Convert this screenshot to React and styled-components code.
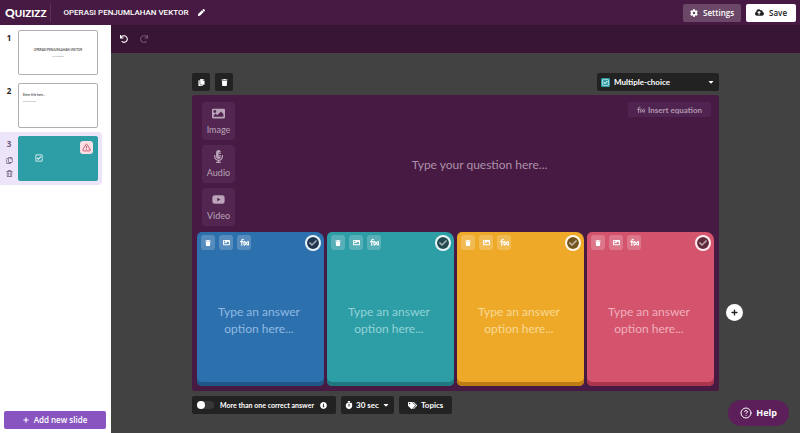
import React from "react";
import styled, { createGlobalStyle, css } from "styled-components";
import {
  FaPen, FaCog, FaCloudUploadAlt, FaUndo, FaRedo, FaCopy, FaTrash, FaImage,
  FaMicrophoneAlt, FaYoutube, FaCaretDown, FaCheck, FaPlus, FaStopwatch,
  FaTags, FaInfoCircle, FaRegCopy, FaRegTrashAlt, FaRegCheckSquare,
} from "react-icons/fa";
import { TriangleAlert, CircleHelp } from "lucide-react";

const ui = '"Open Sans", "Noto Sans", sans-serif';
const round = 'Lato, "Open Sans", sans-serif';

const GlobalStyle = createGlobalStyle`
  *, *::before, *::after { box-sizing: border-box; }
  body { margin: 0; font-family: ${round}; background: #424242; }
  button, select, textarea, input { font: inherit; color: inherit; margin: 0; }
  button, select { cursor: pointer; }
  svg { display: block; flex: none; }
  h1, p { margin: 0; }
`;

const Page = styled.div`
  min-height: 100vh;
  display: flex;
  flex-direction: column;
`;

const Header = styled.header`
  display: flex;
  align-items: center;
  height: 25px;
  padding: 0 4px 0 5px;
  gap: 4px;
  background: #461a42;
  color: #fff;
  font-family: ${ui};
  font-weight: 600;
`;

const Logo = styled.a`
  display: flex;
  align-items: center;
  color: #fff;
  text-decoration: none;
  font: 900 10px/14px ${round};
`;

const LogoInitial = styled.span`
  font-size: 12px;
`;

const Divider = styled.span`
  width: 1px;
  height: 19px;
  background: #5a3156;
`;

const Title = styled.h1`
  margin: 0 5px 0 8px;
  font-family: Roboto, ${ui};
  font-size: 8px;
  line-height: 12px;
  font-weight: 500;
  white-space: nowrap;
`;

const IconButton = styled.button`
  display: flex;
  align-items: center;
  justify-content: center;
  padding: 0;
  border: 0;
  background: none;
  color: ${(p) => p.$color || "#fff"};
`;

const HeaderActions = styled.div`
  display: flex;
  gap: 5px;
  margin-left: auto;
`;

const HeaderButton = styled.button`
  display: flex;
  align-items: center;
  justify-content: center;
  gap: 5px;
  height: 18px;
  padding: 0 ${(p) => (p.$primary ? "9px" : "7px")};
  border: 0;
  border-radius: 2px;
  font-size: 8px;
  background: ${(p) => (p.$primary ? "#fff" : "#6b4768")};
  color: ${(p) => (p.$primary ? "#222" : "#fff")};
`;

const Body = styled.div`
  flex: 1;
  display: grid;
  grid-template-columns: 111px minmax(0, 1fr);
`;

const Sidebar = styled.aside`
  display: flex;
  flex-direction: column;
  background: #fff;
  padding-top: 1px;
`;

const SlideList = styled.ol`
  list-style: none;
  margin: 0;
  padding: 0 9px 0 0;
  flex: 1;
`;

const SlideItem = styled.li`
  display: grid;
  grid-template-columns: 18px 1fr;
  padding: 4px 4px 4px 0;
  border-radius: 0 4px 4px 0;
  background: ${(p) => (p.$active ? "#ece4f9" : "transparent")};
`;

const SlideRail = styled.div`
  display: flex;
  flex-direction: column;
  align-items: center;
  gap: 6px;
  color: ${(p) => (p.$active ? "#6d5a7c" : "#222")};
  font: 700 8px/15px ${ui};
`;

const Thumb = styled.button`
  display: block;
  width: 100%;
  height: 45px;
  padding: ${(p) => (p.$centered ? "16px 0 0" : "5px 4px")};
  border: 1px solid #b5adb5;
  border-radius: 2px;
  background: #fff;
  text-align: ${(p) => (p.$centered ? "center" : "left")};
  color: #555;
  ${(p) => p.$question && css`
    display: flex;
    align-items: flex-start;
    justify-content: space-between;
    padding: 4px 4px 0 16px;
    border-color: #2d9da6;
    background: #2d9da6;
    color: #fff;
  `}
`;

const ThumbTitle = styled.span`
  display: block;
  font-size: 3px;
  line-height: 6px;
  font-weight: 700;
`;

const ThumbText = styled.span`
  display: block;
  font-size: 2px;
  line-height: 6px;
  color: #888;
`;

const ThumbBody = styled.span`
  display: block;
  height: 28px;
`;

const ThumbMark = styled.span`
  align-self: center;
  margin-bottom: 6px;
`;

const Warning = styled.span`
  display: flex;
  align-items: center;
  justify-content: center;
  width: 13px;
  height: 13px;
  border-radius: 3px;
  background: #fbdfe5;
  color: #c0354f;
`;

const AddSlide = styled.button`
  display: flex;
  align-items: center;
  justify-content: center;
  gap: 5px;
  height: 18px;
  margin: 0 5px 4px 4px;
  border: 0;
  border-radius: 2px;
  background: #8854c0;
  color: #fff;
  font: 600 8px/12px ${ui};
`;

const Main = styled.main`
  display: flex;
  flex-direction: column;
  background: #424242;
`;

const History = styled.div`
  display: flex;
  align-items: center;
  gap: 12px;
  height: 28px;
  padding: 0 9px;
  background: #381435;
`;

const Workspace = styled.div`
  flex: 1;
  display: grid;
  grid-template-columns: 81px minmax(0, 1fr) 81px;
  padding: 20px 0 19px;
`;

const Editor = styled.section`
  grid-column: 2;
  display: flex;
  flex-direction: column;
`;

const Bar = styled.div`
  display: flex;
  gap: 5px;
  ${(p) => (p.$bottom ? "margin-top: 5px;" : "margin-bottom: 4px;")}
`;

const dark = css`
  display: flex;
  align-items: center;
  justify-content: center;
  height: 18px;
  border: 0;
  border-radius: 2px;
  background: #222;
  color: #fff;
  font-weight: 700;
  font-size: 8px;
  line-height: 12px;
`;

const DarkButton = styled.button`
  ${dark}
  gap: 4px;
  padding: 0 ${(p) => (p.$square ? "0" : "9px")};
  min-width: 18px;
`;

const Picker = styled.label`
  ${dark}
  gap: ${(p) => (p.$end ? "4px" : "3px")};
  padding: 0 4px;
  ${(p) => p.$end && css`
    width: 122px;
    margin-left: auto;
  `}
`;

const Select = styled.select`
  appearance: none;
  flex: 1 0 auto;
  padding: 0;
  border: 0;
  background: transparent;
  option { color: #222; }
`;

const TypeMark = styled.span`
  padding: 1px;
  border-radius: 1px;
  background: #2d9da6;
`;

const SwitchLabel = styled.label`
  ${dark}
  gap: 6px;
  padding: 0 9px 0 5px;
  font-size: 7px;
`;

const Switch = styled.input`
  appearance: none;
  width: 17px;
  height: 8px;
  border-radius: 4px;
  background: #383838;
  &::before {
    content: "";
    display: block;
    width: 8px;
    height: 8px;
    border-radius: 50%;
    background: #fff;
  }
  &:checked::before { margin-left: auto; }
`;

const Stage = styled.div`
  flex: 1;
  display: flex;
  flex-direction: column;
  padding: 7px 5px 5px;
  border-radius: 3px;
  background: #461a42;
`;

const Prompt = styled.div`
  display: grid;
  grid-template-columns: 33px minmax(0, 1fr);
  column-gap: 13px;
  padding: 0 3px 0 5px;
  margin-bottom: 6px;
`;

const MediaList = styled.div`
  display: flex;
  flex-direction: column;
  gap: 5px;
`;

const MediaButton = styled.button`
  display: flex;
  flex-direction: column;
  align-items: center;
  justify-content: center;
  gap: 4px;
  height: 38px;
  padding: 0;
  border: 0;
  border-radius: 4px;
  background: #522650;
  color: #bba3b9;
  font-size: 9px;
  line-height: 12px;
`;

const Question = styled.div`
  display: grid;
  grid-template-rows: 15px 1fr 15px;
  align-items: center;
`;

const EquationButton = styled.button`
  display: flex;
  align-items: center;
  justify-content: center;
  justify-self: end;
  gap: 3px;
  height: 15px;
  width: 83px;
  padding: 0;
  border: 0;
  border-radius: 2px;
  background: #502450;
  color: #b096ae;
  font-weight: 700;
  font-size: 8px;
`;

const PlainText = styled.textarea`
  display: block;
  width: ${(p) => p.$width};
  padding: 0;
  border: 0;
  outline: 0;
  resize: none;
  overflow: hidden;
  background: transparent;
  color: #fff;
  text-align: center;
  font-size: 12px;
  line-height: 17px;
  &::placeholder { color: ${(p) => p.$hint}; opacity: 1; }
`;

const Answers = styled.div`
  flex: 1;
  display: grid;
  grid-template-columns: repeat(4, minmax(0, 1fr));
  gap: 3px;
`;

const Answer = styled.article`
  display: flex;
  flex-direction: column;
  padding: 3px 3px 0 4px;
  border-radius: 5px 8px 5px 5px;
  background: ${(p) => p.$color};
  box-shadow: inset 0 -4px 0 ${(p) => p.$edge};
`;

const AnswerTools = styled.div`
  display: flex;
  align-items: flex-start;
  gap: 4px;
  height: 18px;
`;

const Tool = styled(IconButton)`
  width: 14px;
  height: 15px;
  border-radius: 3px;
  background: rgba(255, 255, 255, 0.2);
`;

const Correct = styled.label`
  display: flex;
  align-items: center;
  justify-content: center;
  width: 16px;
  height: 16px;
  margin-left: auto;
  border: 2px solid rgba(255, 255, 255, 0.9);
  border-radius: 50%;
  background: ${(p) => p.$fill};
  background-clip: padding-box;
  color: rgba(255, 255, 255, 0.6);
`;

const HiddenCheck = styled.input`
  appearance: none;
  width: 0;
  height: 0;
`;

const AnswerBody = styled.div`
  flex: 1;
  display: flex;
  align-items: center;
  justify-content: center;
  padding-right: 4px;
`;

const AddOption = styled(IconButton)`
  grid-column: 3;
  align-self: end;
  width: 17px;
  height: 17px;
  margin: 0 0 93px 7px;
  border-radius: 50%;
  background: #fff;
`;

const Help = styled.button`
  position: fixed;
  right: 11px;
  bottom: 7px;
  display: flex;
  align-items: center;
  justify-content: center;
  gap: 4px;
  height: 26px;
  padding: 0 12px;
  border: 0;
  border-radius: 13px;
  background: #5c1f5a;
  color: #fff;
  font: 700 9px/14px ${ui};
`;

const FunctionIcon = ({ size = 8 }) => (
  <svg width={size} height={size} viewBox="0 0 16 16" fill="none" stroke="currentColor" strokeWidth="2" strokeLinecap="round">
    <path d="M6 2.5C3.8 1.7 3.2 3 3.2 5V13M1 6.5H5.5M8 6C6.8 8 6.8 11 8 13M14.2 6C15.4 8 15.4 11 14.2 13M9.6 7.5L12.6 11.5M12.6 7.5L9.6 11.5" />
  </svg>
);

const answers = [
  { color: "#2d70ae", edge: "#205688", fill: "#21354f", hint: "#90bae2" },
  { color: "#2d9da6", edge: "#20777f", fill: "#24494e", hint: "#94d3d7" },
  { color: "#efa929", edge: "#bd7d13", fill: "#735521", hint: "#f8d994" },
  { color: "#d5546d", edge: "#aa354d", fill: "#5e2c3a", hint: "#f0afbc" },
];

const media = [
  { label: "Image", Icon: FaImage },
  { label: "Audio", Icon: FaMicrophoneAlt },
  { label: "Video", Icon: FaYoutube },
];

export default function App() {
  return (
    <Page>
      <GlobalStyle />
      <Header>
        <Logo href="#" aria-label="Quizizz"><LogoInitial>Q</LogoInitial>UIZIZZ</Logo>
        <Divider />
        <Title>OPERASI PENJUMLAHAN VEKTOR</Title>
        <IconButton aria-label="Rename"><FaPen size={7} /></IconButton>
        <HeaderActions>
          <HeaderButton><FaCog size={8} />Settings</HeaderButton>
          <HeaderButton $primary><FaCloudUploadAlt size={9} />Save</HeaderButton>
        </HeaderActions>
      </Header>
      <Body>
        <Sidebar>
          <SlideList>
            <SlideItem>
              <SlideRail>1</SlideRail>
              <Thumb $centered>
                <ThumbBody>
                  <ThumbTitle>OPERASI PENJUMLAHAN VEKTOR</ThumbTitle>
                  <ThumbText>by Wulandari</ThumbText>
                </ThumbBody>
              </Thumb>
            </SlideItem>
            <SlideItem>
              <SlideRail>2</SlideRail>
              <Thumb>
                <ThumbBody>
                  <ThumbTitle>Enter title here...</ThumbTitle>
                  <ThumbText>Enter text here</ThumbText>
                </ThumbBody>
              </Thumb>
            </SlideItem>
            <SlideItem $active>
              <SlideRail $active>
                3
                <IconButton $color="#6d5a7c" aria-label="Duplicate slide 3"><FaRegCopy size={7} /></IconButton>
                <IconButton $color="#6d5a7c" aria-label="Delete slide 3"><FaRegTrashAlt size={7} /></IconButton>
              </SlideRail>
              <Thumb $question aria-label="Slide 3">
                <ThumbMark><FaRegCheckSquare size={8} /></ThumbMark>
                <Warning><TriangleAlert size={9} /></Warning>
              </Thumb>
            </SlideItem>
          </SlideList>
          <AddSlide><FaPlus size={6} />Add new slide</AddSlide>
        </Sidebar>
        <Main>
          <History>
            <IconButton aria-label="Undo"><FaUndo size={8} /></IconButton>
            <IconButton aria-label="Redo" $color="#75576f"><FaRedo size={8} /></IconButton>
          </History>
          <Workspace>
            <Editor>
              <Bar>
                <DarkButton $square aria-label="Duplicate"><FaCopy size={7} /></DarkButton>
                <DarkButton $square aria-label="Delete"><FaTrash size={7} /></DarkButton>
                <Picker $end>
                  <TypeMark><FaRegCheckSquare size={7} /></TypeMark>
                  <Select aria-label="Question type"><option>Multiple-choice</option></Select>
                  <FaCaretDown size={8} />
                </Picker>
              </Bar>
              <Stage>
                <Prompt>
                  <MediaList>
                    {media.map(({ label, Icon }) => (
                      <MediaButton key={label}><Icon size={13} />{label}</MediaButton>
                    ))}
                  </MediaList>
                  <Question>
                    <EquationButton><FunctionIcon size={8} />Insert equation</EquationButton>
                    <PlainText rows={1} $width="100%" $hint="#ad91aa" placeholder="Type your question here..." aria-label="Question" />
                  </Question>
                </Prompt>
                <Answers>
                  {answers.map((a, i) => (
                    <Answer key={a.color} $color={a.color} $edge={a.edge}>
                      <AnswerTools>
                        <Tool aria-label="Delete option"><FaTrash size={6} /></Tool>
                        <Tool aria-label="Add image"><FaImage size={7} /></Tool>
                        <Tool aria-label="Insert equation"><FunctionIcon size={9} /></Tool>
                        <Correct $fill={a.fill}>
                          <HiddenCheck type="checkbox" aria-label={`Option ${i + 1} is correct`} />
                          <FaCheck size={8} />
                        </Correct>
                      </AnswerTools>
                      <AnswerBody>
                        <PlainText rows={2} $width="92px" $hint={a.hint} placeholder="Type an answer option here..." aria-label={`Answer ${i + 1}`} />
                      </AnswerBody>
                    </Answer>
                  ))}
                </Answers>
              </Stage>
              <Bar $bottom>
                <SwitchLabel>
                  <Switch type="checkbox" />
                  More than one correct answer
                  <FaInfoCircle size={7} />
                </SwitchLabel>
                <Picker>
                  <FaStopwatch size={8} />
                  <Select aria-label="Time limit"><option>30 sec</option></Select>
                  <FaCaretDown size={8} />
                </Picker>
                <DarkButton><FaTags size={9} />Topics</DarkButton>
              </Bar>
            </Editor>
            <AddOption aria-label="Add answer option" $color="#222"><FaPlus size={7} /></AddOption>
          </Workspace>
        </Main>
      </Body>
      <Help><CircleHelp size={12} />Help</Help>
    </Page>
  );
}
